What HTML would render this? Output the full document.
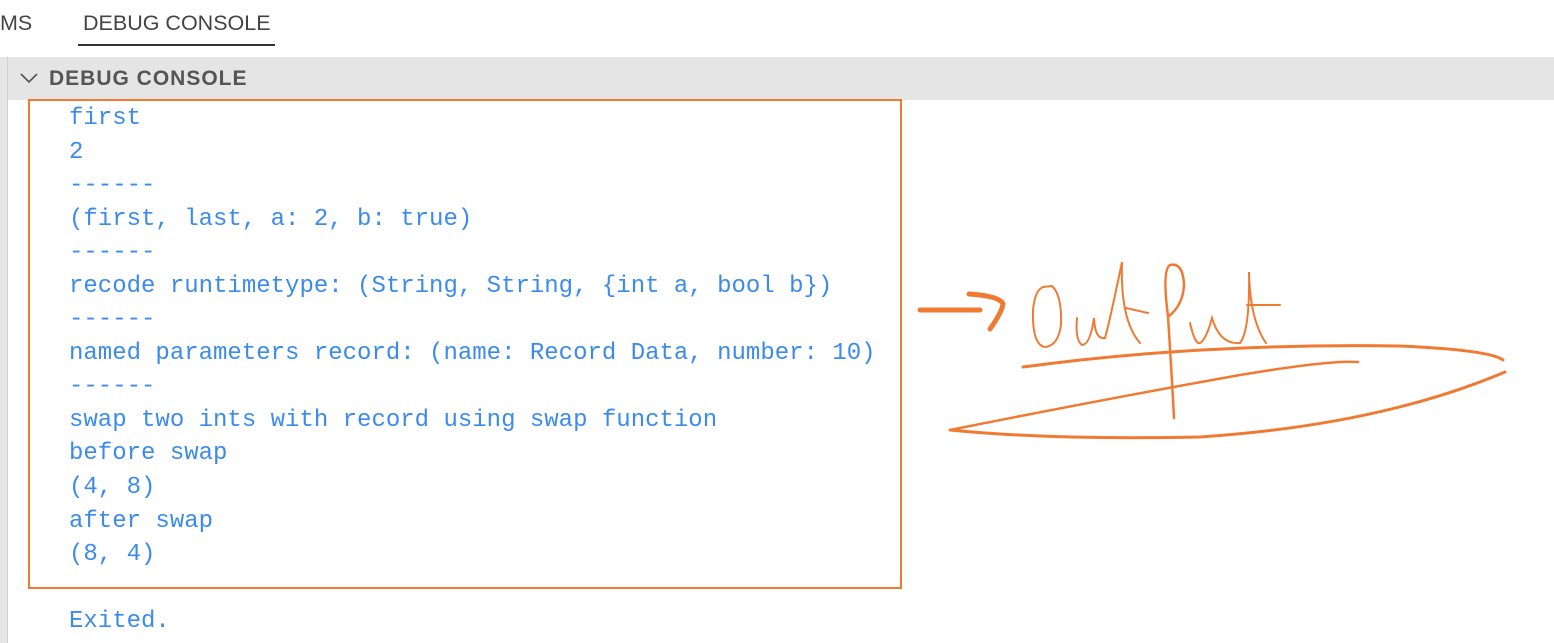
<!DOCTYPE html>
<html><head><meta charset="utf-8"><style>
body{margin:0;width:1554px;height:643px;background:#fff;position:relative;overflow:hidden;font-family:"Liberation Sans",sans-serif}
.tab{position:absolute;top:11px;font-size:21.5px;color:#444}
.strip{position:absolute;left:0;top:57px;width:7px;height:586px;background:#e6e6e6;border-right:1px solid #d0d0d0}
.hdr{position:absolute;left:8px;top:57px;width:1546px;height:43px;background:#e5e5e5}
.hdr span{position:absolute;left:41px;top:10px;font-weight:bold;font-size:21px;color:#555;letter-spacing:1px}
.box{position:absolute;left:28px;top:99px;width:870px;height:486px;border:2.5px solid #f07a32}
.txt{position:absolute;left:69px;top:102px;font-family:"Liberation Mono",monospace;font-size:24px;line-height:33.55px;color:#3b8bee;white-space:pre;margin:0}
</style></head><body>
<div class="tab" style="left:0">MS</div>
<div class="tab" style="left:83px">DEBUG CONSOLE</div>
<div style="position:absolute;left:78px;top:44px;width:197px;height:2px;background:#333"></div>
<div class="strip"></div>
<div class="hdr"><svg style="position:absolute;left:12px;top:15px" width="18" height="12"><path d="M1 2 L9 10 L17 2" fill="none" stroke="#555" stroke-width="1.6"/></svg><span>DEBUG CONSOLE</span></div>
<div class="box"></div>
<pre class="txt">first
2
------
(first, last, a: 2, b: true)
------
recode runtimetype: (String, String, {int a, bool b})
------
named parameters record: (name: Record Data, number: 10)
------
swap two ints with record using swap function
before swap
(4, 8)
after swap
(8, 4)

Exited.</pre>
<svg style="position:absolute;left:0;top:0" width="1554" height="643" fill="none" stroke="#f07a32" stroke-linecap="round">
<path d="M920 310 L980 310" stroke-width="5"/>
<path d="M969 294 Q1000 296 1003 304 Q1002 312 990 329" stroke-width="5"/>
<path d="M1043 287 Q1035 290 1033 310 Q1032 345 1045 347 Q1058 346 1061 325 Q1062 295 1052 286 Z" stroke-width="2"/>
<path d="M1077 318 Q1075 340 1082 345 Q1090 345 1094 318 Q1095 340 1105 338 Q1110 320 1122 262 Q1120 320 1140 343" stroke-width="2"/>
<path d="M1126 308 L1148 313" stroke-width="2"/>
<path d="M1168 316 Q1162 270 1170 265 Q1183 262 1184 285 Q1183 305 1169 316 M1168 316 Q1172 380 1174 418" stroke-width="2.5"/>
<path d="M1190 323 Q1195 345 1200 343 Q1206 340 1212 318 Q1220 345 1240 343 Q1250 330 1249 272 Q1250 320 1266 343" stroke-width="2"/>
<path d="M1247 305 L1280 305" stroke-width="2"/>
<path d="M1023 367 Q1200 343 1400 346 Q1490 350 1503 360" stroke-width="3"/>
<path d="M950 430 Q1100 400 1240 375 Q1330 360 1358 362" stroke-width="2.5"/>
<path d="M950 430 Q1050 440 1200 437 Q1380 425 1505 372" stroke-width="3"/>
</svg>
</body></html>
